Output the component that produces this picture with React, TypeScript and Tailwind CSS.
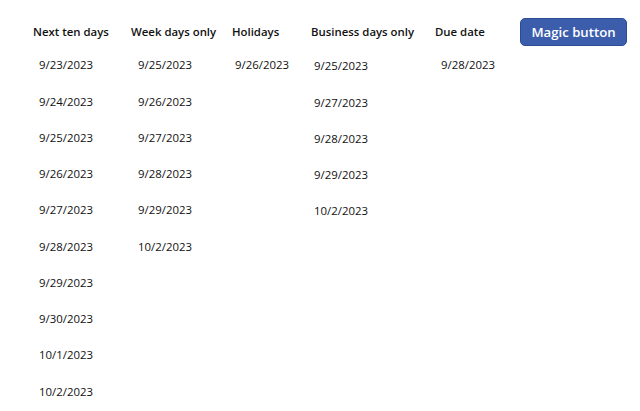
import React from 'react';

interface Column {
  title: string;
  width: string;
  pad: string;
  dates: string[];
}

const columns: Column[] = [
  {
    title: 'Next ten days',
    width: 'w-[98px]',
    pad: 'pl-[6px]',
    dates: ['9/23/2023', '9/24/2023', '9/25/2023', '9/26/2023', '9/27/2023', '9/28/2023', '9/29/2023', '9/30/2023', '10/1/2023', '10/2/2023'],
  },
  {
    title: 'Week days only',
    width: 'w-[101px]',
    pad: 'pl-[7px]',
    dates: ['9/25/2023', '9/26/2023', '9/27/2023', '9/28/2023', '9/29/2023', '10/2/2023'],
  },
  {
    title: 'Holidays',
    width: 'w-[79px]',
    pad: 'pl-[3px]',
    dates: ['9/26/2023'],
  },
  {
    title: 'Business days only',
    width: 'w-[124px]',
    pad: 'pl-[3px] pt-px',
    dates: ['9/25/2023', '9/27/2023', '9/28/2023', '9/29/2023', '10/2/2023'],
  },
  {
    title: 'Due date',
    width: 'w-[85px]',
    pad: 'pl-[6px]',
    dates: ['9/28/2023'],
  },
];

const App: React.FC = () => {
  return (
    <div className="w-[640px] h-[411px] bg-white overflow-hidden font-['Open_Sans',sans-serif] text-[#111]">
      <div className="flex pl-[33px] pt-[18px]">
        {columns.map((col) => (
          <div key={col.title} className={col.width}>
            <div className="h-[28px] flex items-center text-[11.4px] font-semibold whitespace-nowrap">
              {col.title}
            </div>
            <div className={`mt-px ${col.pad}`}>
              {col.dates.map((d) => (
                <div key={d} className="h-[36.25px] flex items-center text-[11.4px] leading-none">
                  {d}
                </div>
              ))}
            </div>
          </div>
        ))}
        <button className="w-[107px] h-[28px] pt-px rounded-[5px] bg-[#3b5dac] border border-[#2e4c93] text-white text-[13.2px] font-semibold">
          Magic button
        </button>
      </div>
    </div>
  );
};

export default App;
